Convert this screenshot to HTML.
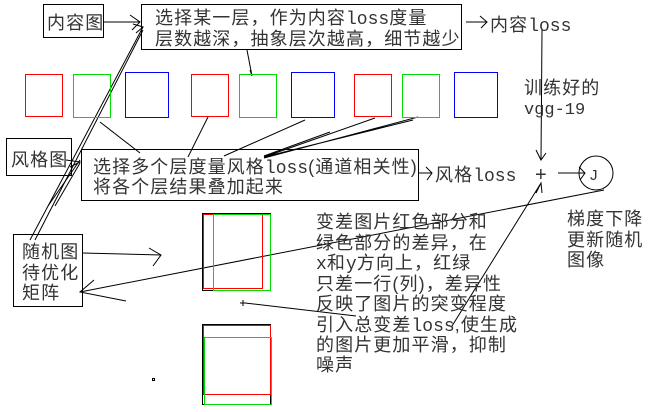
<!DOCTYPE html>
<html><head><meta charset="utf-8"><style>
html,body{margin:0;padding:0;background:#fff;}
svg{display:block;}
text{font-family:"Liberation Sans","Noto Sans CJK SC",sans-serif;font-size:18px;fill:#333;letter-spacing:1.1px;}
.l{font-family:"Liberation Mono","Noto Sans CJK SC",monospace;letter-spacing:0;}
</style></head><body>
<svg width="660" height="412" viewBox="0 0 660 412" xmlns="http://www.w3.org/2000/svg">
<g fill="none" stroke="#000" stroke-width="1">
<rect x="43.5" y="4.5" width="60" height="33"/>
<rect x="141.5" y="4.5" width="320" height="45"/>
<rect x="6.5" y="138.5" width="65" height="37"/>
<rect x="81.5" y="149.5" width="337" height="51"/>
<rect x="13.5" y="234.5" width="69" height="72"/>
<circle cx="596" cy="173" r="17"/>
<path d="M103 22 L140 22 M130 15 L140 22 L132 30"/>
<path d="M466 22 L487 22 M480 16 L487 22 L481 28"/>
<path d="M419 173 L432 173 M426 167 L432 173 L427 180"/>
<path d="M558 173 L585 173 M579 167 L585 173 L580 180"/>
<path d="M542 30 L541 160 M536 150 L541 160 L546 153"/>
<path d="M247 50 L252 76 M250 70 L252 76"/>
<path d="M82 253 L161 255 M149 248 L161 255 L153 266"/>
<path d="M604 190 L80 292 M94 280 L80 292 L126 301"/>
<path d="M541 183 L452 326 M536 193 L541 183 L542 193"/>
<path d="M245 303 L356 316"/>
<path d="M30 240 L143 27 M35 240 L143 30 M133 24 L143 27 L136 33"/>
<path d="M48 206 L80 160 M55 206 L80 163 M66 160 L80 162 L70 167"/>
<path d="M100 122 L140 153 M208 117 L188 157 M305 120 L224 156 M375 118 L264 157 M330 132 L264 156 M418 117 L264 158 M413 120 L264 157"/>
</g>
<g fill="none" stroke-width="1">
<rect x="25.5" y="74.5" width="37" height="42" stroke="#f00"/>
<rect x="73.5" y="74.5" width="37" height="43" stroke="#0d0"/>
<rect x="125.5" y="72.5" width="43" height="45" stroke="#00f"/>
<rect x="191.5" y="74.5" width="37" height="42" stroke="#f00"/>
<rect x="239.5" y="74.5" width="37" height="43" stroke="#0d0"/>
<rect x="291.5" y="72.5" width="43" height="45" stroke="#00f"/>
<rect x="354.5" y="74.5" width="37" height="42" stroke="#f00"/>
<rect x="402.5" y="74.5" width="37" height="43" stroke="#0d0"/>
<rect x="454.5" y="72.5" width="43" height="45" stroke="#00f"/>
<rect x="202.5" y="213.5" width="68" height="77" stroke="#000"/>
<rect x="203.5" y="214.5" width="59" height="74" stroke="#f00"/>
<rect x="213.5" y="214.5" width="57" height="76" stroke="#0d0"/>
<rect x="202.5" y="324.5" width="68" height="80" stroke="#000"/>
<rect x="203.5" y="325.5" width="67" height="69" stroke="#f00"/>
<rect x="204.5" y="337.5" width="67" height="67" stroke="#0d0"/>
<rect x="152.5" y="378.5" width="2" height="2" stroke="#000"/>
<path d="M243 300 L243 306 M240 303 L246 303" stroke="#000"/>
</g>
<text x="47" y="29">内容图</text>
<text x="155" y="24">选择某一层，作为内容<tspan class="l">loss</tspan>度量</text>
<text x="155" y="45">层数越深，抽象层次越高，细节越少</text>
<text x="490" y="31">内容<tspan class="l">loss</tspan></text>
<text x="524" y="94">训练好的</text>
<text x="524" y="114" class="l" style="font-size:17px">vgg-19</text>
<text x="11" y="166">风格图</text>
<text x="93" y="173">选择多个层度量风格<tspan class="l">loss</tspan>(通道相关性)</text>
<text x="93" y="193">将各个层结果叠加起来</text>
<text x="435" y="181">风格<tspan class="l">loss</tspan></text>
<text x="535" y="181" style="font-size:20px">+</text>
<text x="590" y="180" style="font-size:15px">J</text>
<text x="22" y="258">随机图</text>
<text x="22" y="279">待优化</text>
<text x="22" y="299">矩阵</text>
<text x="316" y="228">变差图片红色部分和</text>
<text x="316" y="249">绿色部分的差异，在</text>
<text x="316" y="269"><tspan class="l">x</tspan>和<tspan class="l">y</tspan>方向上，红绿</text>
<text x="316" y="290">只差一行(列)，差异性</text>
<text x="316" y="310">反映了图片的突变程度</text>
<text x="316" y="331">引入总变差<tspan class="l">loss</tspan>,使生成</text>
<text x="316" y="351">的图片更加平滑，抑制</text>
<text x="316" y="371">噪声</text>
<text x="567" y="225">梯度下降</text>
<text x="567" y="246">更新随机</text>
<text x="567" y="266">图像</text>
</svg>
</body></html>
